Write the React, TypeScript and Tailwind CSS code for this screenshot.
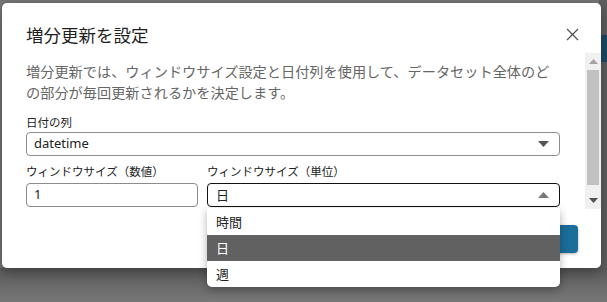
const jp = { fontFamily: '"Noto Sans CJK JP", "Noto Sans", sans-serif' };

function Caret({ up, color }: { up?: boolean; color: string }) {
  return (
    <svg width="11" height="6" viewBox="0 0 11 6" className="shrink-0">
      {up ? <polygon points="0,6 11,6 5.5,0" fill={color} /> : <polygon points="0,0 11,0 5.5,6" fill={color} />}
    </svg>
  );
}

function ScrollBar() {
  return (
    <div className="w-[16px] h-full bg-[#f0f0f0] flex flex-col items-center shrink-0">
      <div className="h-[17px] w-full flex items-center justify-center">
        <svg width="9" height="5" viewBox="0 0 9 5">
          <polygon points="0,5 9,5 4.5,0" fill="#a3a3a3" />
        </svg>
      </div>
      <div className="w-[12px] h-[115px] bg-[#c1c1c1]" />
      <div className="flex-1" />
      <div className="h-[17px] w-full flex items-center justify-center">
        <svg width="9" height="5" viewBox="0 0 9 5">
          <polygon points="0,0 9,0 4.5,5" fill="#505050" />
        </svg>
      </div>
    </div>
  );
}

export default function App() {
  const units = ['時間', '日', '週'];

  return (
    <div className="relative w-[607px] h-[302px] overflow-hidden bg-[#767676]" style={jp}>
      {/* page behind the overlay */}
      <div className="absolute right-0 top-0 w-[8px] h-full bg-[#5f5f5f]" />
      <div className="absolute right-0 top-[35px] w-[8px] h-[27px] bg-[#1d4a66]" />
      <div className="absolute left-0 top-[268px] w-full h-[34px] bg-gradient-to-b from-[#5c5c5c] to-[#777777]" />

      {/* modal */}
      <div className="absolute left-[2px] top-[3px] w-[599px] h-[265px] bg-white rounded-[5px] shadow-[0_4px_14px_rgba(0,0,0,0.35)] flex flex-col overflow-hidden">
        <div className="h-[50px] shrink-0 flex items-start justify-between pl-[24px] pr-[22px] pt-[20px]">
          <h2 className="text-[17.5px] leading-[23px] text-[#1f1f1f]">増分更新を設定</h2>
          <svg width="13" height="13" viewBox="0 0 13 13" className="mt-[5px]">
            <path d="M1 1L12 12M12 1L1 12" stroke="#555" strokeWidth="1.3" />
          </svg>
        </div>

        <div className="h-[156px] shrink-0 flex overflow-hidden">
          <div className="flex-1 pl-[24px] pr-[25px] pt-[8px]">
            <p className="text-[14.2px] leading-[21px] text-[#666666] w-[532px]">
              増分更新では、ウィンドウサイズ設定と日付列を使用して、データセット全体のどの部分が毎回更新されるかを決定します。
            </p>

            <div className="mt-[11px] text-[11.5px] leading-[16px] text-[#222]">日付の列</div>
            <div className="mt-[2px] h-[24px] border border-[#8c8c8c] rounded-[4px] flex items-center justify-between pl-[7px] pr-[10px]">
              <span className="text-[13px] text-[#222]" style={{ fontFamily: '"Noto Sans", sans-serif' }}>datetime</span>
              <Caret color="#555" />
            </div>

            <div className="mt-[7px] flex gap-[9px]">
              <div className="w-[172px]">
                <div className="text-[11.5px] leading-[16px] text-[#222]">ウィンドウサイズ（数値）</div>
                <div className="mt-[4px] h-[24px] border border-[#8c8c8c] rounded-[4px] flex items-center pl-[7px]">
                  <span className="text-[13px] text-[#222]" style={{ fontFamily: '"Noto Sans", sans-serif' }}>1</span>
                </div>
              </div>
              <div className="flex-1">
                <div className="text-[11.5px] leading-[16px] text-[#222]">ウィンドウサイズ（単位）</div>
                <div className="mt-[4px] h-[24px] border border-[#111] rounded-[4px] flex items-center justify-between pl-[8px] pr-[10px]">
                  <span className="text-[13px] text-[#222]">日</span>
                  <Caret up color="#777" />
                </div>
              </div>
            </div>
          </div>
          <ScrollBar />
        </div>

        <div className="flex-1 flex justify-end items-start pt-[16px] pr-[23px]">
          <button className="w-[72px] h-[28px] rounded-[4px] bg-[#1a6e99] text-white text-[13px] shadow-[0_1px_3px_rgba(0,0,0,0.3)]">
            保存
          </button>
        </div>
      </div>

      {/* open listbox */}
      <ul className="absolute left-[207px] top-[208px] w-[353px] bg-white rounded-b-[5px] shadow-[0_3px_8px_rgba(0,0,0,0.3)] overflow-hidden">
        {units.map((u) => (
          <li
            key={u}
            className={
              u === '日'
                ? 'h-[26px] flex items-center pl-[9px] text-[13px] bg-[#616161] text-white'
                : 'h-[26.5px] flex items-center pl-[9px] text-[13px] text-[#222]'
            }
          >
            {u}
          </li>
        ))}
      </ul>
    </div>
  );
}
